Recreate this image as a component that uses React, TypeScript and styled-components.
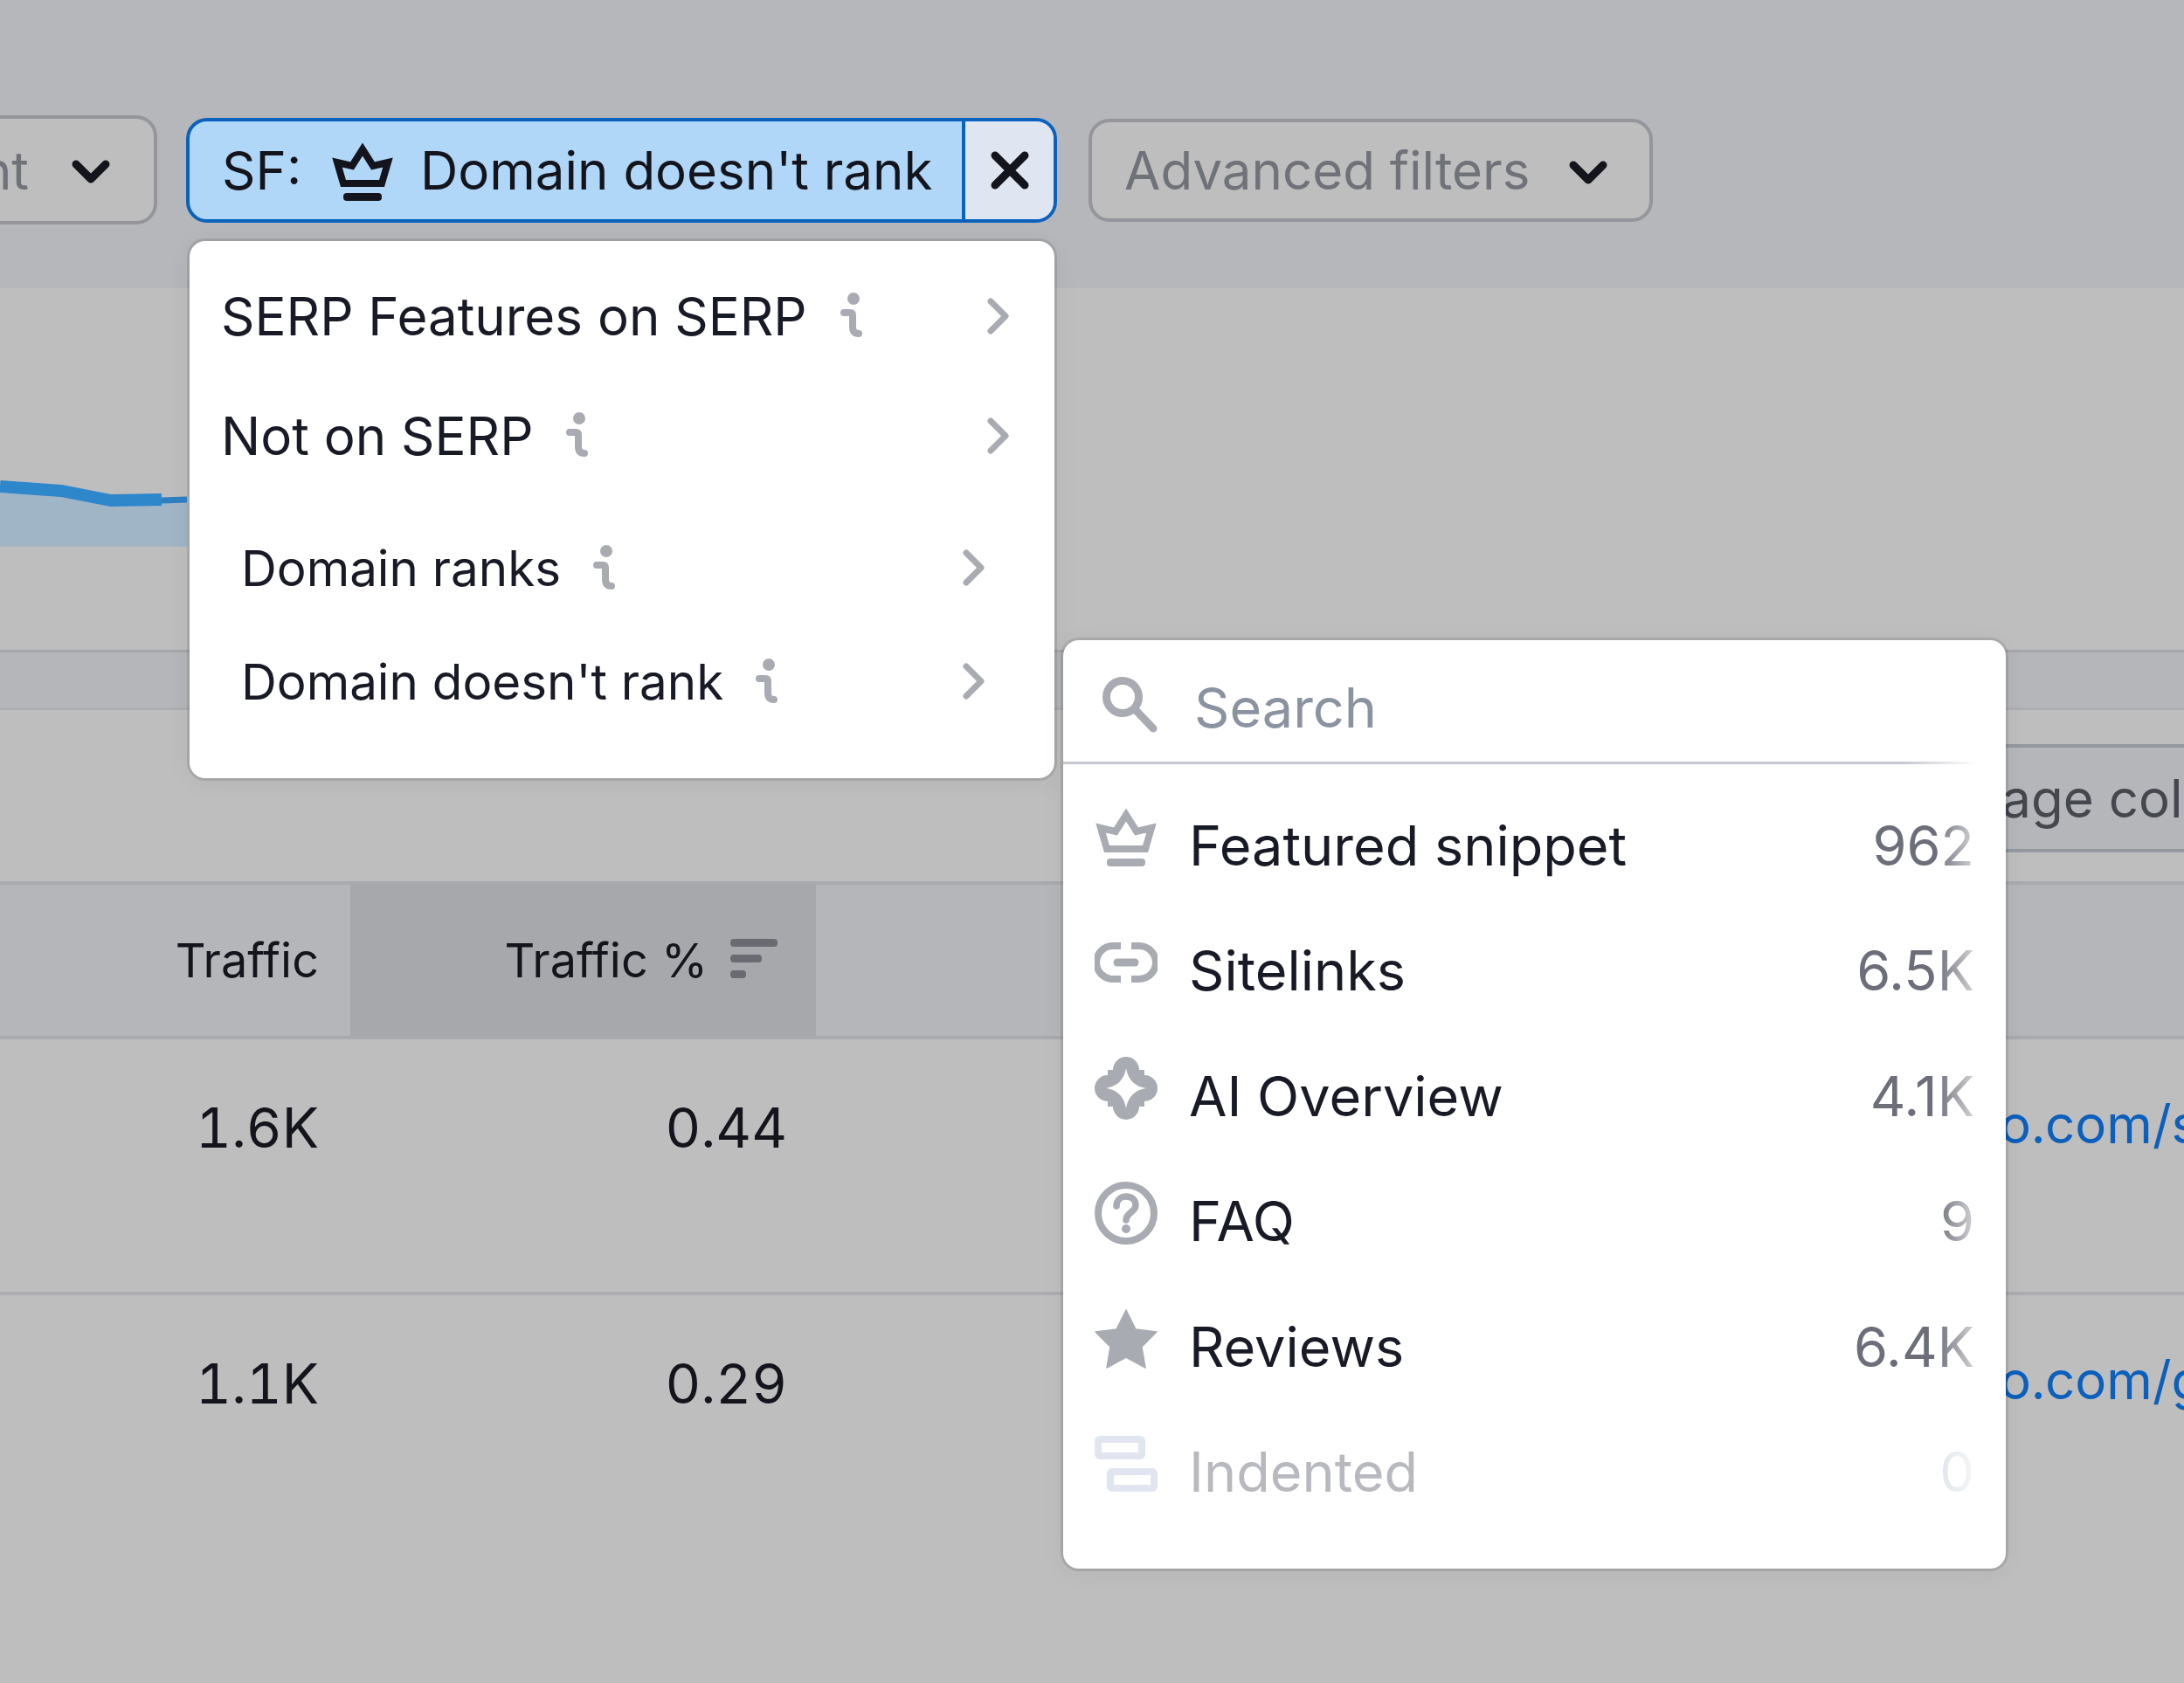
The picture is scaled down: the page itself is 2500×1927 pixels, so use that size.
import React from 'react';
import styled, { createGlobalStyle } from 'styled-components';

const GlobalStyle = createGlobalStyle`
  html, body { margin: 0; padding: 0; }
  body { font-family: Inter, "Liberation Sans", sans-serif; color: #181a25; }
  svg { flex-shrink: 0; }
`;

const Page = styled.div`
  position: relative;
  width: 2500px;
  height: 1927px;
  overflow: hidden;
  background: #bebebe;
  display: flex;
  flex-direction: column;
`;

const TopBar = styled.div`
  height: 330px;
  box-sizing: border-box;
  padding-top: 132px;
  background: #b6b7ba;
  display: flex;
  align-items: flex-start;
  gap: 36px;
`;

const SelectButton = styled.div<{ $clipped?: boolean }>`
  box-sizing: border-box;
  height: ${(p) => (p.$clipped ? 125 : 118)}px;
  margin-top: ${(p) => (p.$clipped ? 0 : 4)}px;
  width: ${(p) => (p.$clipped ? '180px' : '646px')};
  border: 4px solid #94969c;
  border-left-width: ${(p) => (p.$clipped ? 0 : 4)}px;
  border-radius: ${(p) => (p.$clipped ? '0 24px 24px 0' : '24px')};
  background: #bebebe;
  display: flex;
  align-items: center;
  justify-content: ${(p) => (p.$clipped ? 'flex-end' : 'flex-start')};
  overflow: hidden;
  padding: ${(p) => (p.$clipped ? '0 50px 0 0' : '0 0 0 37px')};
  font-size: 60px;
  color: #707279;
  white-space: nowrap;
`;

const ButtonLabel = styled.span<{ $gap: number }>`
  flex-shrink: 0;
  margin-right: ${(p) => p.$gap}px;
`;

const FilterChip = styled.div`
  box-sizing: border-box;
  width: 997px;
  height: 120px;
  margin: 3px 0 0 -3px;
  border: 4px solid #0a62bd;
  border-radius: 24px;
  overflow: hidden;
  display: flex;
  background: #b0d6f8;
  font-size: 60px;
  color: #14151c;
  white-space: nowrap;
`;

const ChipBody = styled.div`
  width: 884px;
  flex-shrink: 0;
  box-sizing: border-box;
  padding-left: 37px;
  display: flex;
  align-items: center;
`;

const ChipClose = styled.div`
  flex: 1;
  border-left: 4px solid #0a62bd;
  background: #e0e6f1;
  display: flex;
  align-items: center;
  justify-content: center;
`;

const ChipPrefix = styled.span`
  width: 125px;
  flex-shrink: 0;
`;

const ChipCrown = styled.span`
  display: flex;
  width: 102px;
  flex-shrink: 0;
  margin-top: 2px;
`;

const ChartArea = styled.div`
  height: 414px;
  display: flex;
  align-items: flex-start;
`;

const ChartSvg = styled.svg`
  display: block;
  margin-top: 210px;
`;

const TabBand = styled.div`
  height: 69px;
  box-sizing: border-box;
  background: #b5b6b9;
  border-top: 3px solid #a6a7ac;
  border-bottom: 3px solid #aeafb3;
`;

const Toolbar = styled.div`
  margin: 39px 0 0 1217px;
  height: 124px;
  box-sizing: border-box;
  background: #b5b6b9;
  border-top: 4px solid #9498a0;
  border-bottom: 4px solid #9498a0;
  display: flex;
  align-items: center;
  padding-left: 951px;
  font-size: 60px;
  color: #45474f;
  white-space: nowrap;
`;

const Table = styled.div`
  margin-top: 33px;
  display: grid;
  grid-template-columns: 401px 533px 1fr;
`;

const HeadCell = styled.div<{ $sorted?: boolean }>`
  height: 181px;
  box-sizing: border-box;
  border-top: 4px solid #a9aab0;
  border-bottom: 4px solid #a9aab0;
  background: ${(p) => (p.$sorted ? '#a7a8ac' : '#b5b6ba')};
  display: flex;
  align-items: center;
  justify-content: flex-end;
  gap: 26px;
  padding-right: ${(p) => (p.$sorted ? 44 : 36)}px;
  font-size: 54px;
  color: #14151c;
`;

const SortBars = styled.div`
  display: flex;
  flex-direction: column;
  gap: 9px;
  margin-bottom: 5px;
`;

const SortBar = styled.div<{ $width: number }>`
  width: ${(p) => p.$width}px;
  height: 9px;
  border-radius: 4px;
  background: #6a6b72;
`;

const BodyCell = styled.div<{ $h: number; $last?: boolean; $pr?: number }>`
  height: ${(p) => p.$h}px;
  box-sizing: border-box;
  border-bottom: ${(p) => (p.$last ? 'none' : '4px solid #acadb2')};
  padding-top: 61px;
  padding-right: ${(p) => p.$pr ?? 36}px;
  text-align: right;
  font-size: 63px;
  font-variant-numeric: tabular-nums;
  line-height: 80px;
  color: #14151c;
`;

const UrlCell = styled(BodyCell)`
  text-align: left;
  padding-top: 57px;
  padding-left: 1355px;
  padding-right: 0;
  font-size: 60px;
  color: #0b60bd;
  white-space: nowrap;
`;

const Menu = styled.div`
  position: absolute;
  box-sizing: border-box;
  background: #fff;
  border-radius: 18px;
  box-shadow: 0 0 0 3px rgba(0, 0, 0, 0.1), 0 4px 30px rgba(0, 0, 0, 0.06);
`;

const FilterMenu = styled(Menu)`
  left: 217px;
  top: 276px;
  width: 990px;
  height: 615px;
  padding: 17px 0 46px;
`;

const SpacedGroup = styled.div`
  margin-top: 18px;
`;

const MenuRow = styled.div<{ $sub?: boolean }>`
  height: ${(p) => (p.$sub ? 130 : 137)}px;
  box-sizing: border-box;
  padding: ${(p) => (p.$sub ? '0 80px 0 59px' : '0 52px 0 36px')};
  display: flex;
  align-items: center;
  font-size: ${(p) => (p.$sub ? 56.5 : 60)}px;
  white-space: nowrap;
`;

const RowInfo = styled.svg<{ $sub?: boolean }>`
  margin-left: ${(p) => (p.$sub ? 37 : 38)}px;
  margin-bottom: 2px;
`;

const RowChevron = styled.svg`
  margin-left: auto;
`;

const FeatureMenu = styled(Menu)`
  left: 1217px;
  top: 733px;
  width: 1079px;
  height: 1063px;
`;

const SearchBox = styled.div`
  height: 142px;
  box-sizing: border-box;
  margin-right: 33px;
  border-bottom: 3px solid #c5c8d0;
  border-image: linear-gradient(to right, #c5c8d0 92%, #ffffff) 1;
  padding: 14px 0 0 45px;
  display: flex;
  align-items: center;
  gap: 42px;
  font-size: 63px;
  color: #8b92a0;
`;

const SearchGlass = styled.svg`
  margin-top: -6px;
`;

const FeatureList = styled.div`
  padding-top: 21px;
`;

const FeatureRow = styled.div<{ $off?: boolean }>`
  height: 143.5px;
  box-sizing: border-box;
  padding: 0 36px 0 36px;
  display: flex;
  align-items: center;
  font-size: 63px;
  color: ${(p) => (p.$off ? '#b7b9bf' : '#181a25')};
  white-space: nowrap;
`;

const FeatureIcon = styled.span`
  display: flex;
  justify-content: center;
  align-items: center;
  width: 72px;
  height: 72px;
  margin: -18px 36px 0 0;
`;

const FeatureCount = styled.span<{ $off?: boolean }>`
  margin-left: auto;
  color: ${(p) => (p.$off ? '#dfe3ea' : '#6c6e79')};
  -webkit-mask-image: linear-gradient(to left, rgba(0, 0, 0, 0.3), #000 44px);
  mask-image: linear-gradient(to left, rgba(0, 0, 0, 0.3), #000 44px);
`;

const DownMark = styled.svg`
  margin-top: 5px;
`;

const GREY = '#a9abb2';

const Crown = ({ color }: { color: string }) => (
  <svg width="72" height="67" viewBox="0 0 72 67">
    <path
      d="M36 8 L48 27 L65 23 L58 47 H14 L7 23 L24 27 Z"
      fill="none"
      stroke={color}
      strokeWidth="8"
      strokeLinejoin="miter"
      strokeMiterlimit="6"
    />
    <rect x="14" y="58" width="44" height="9" rx="4" fill={color} />
  </svg>
);

const LinkIcon = () => (
  <svg width="72" height="46" viewBox="0 0 72 46" fill="none" stroke={GREY} strokeWidth="8">
    <path d="M30 4 H21 A19 19 0 0 0 21 42 H30" />
    <path d="M42 4 H51 A19 19 0 0 1 51 42 H42" />
    <path d="M26 23 H46" strokeLinecap="round" strokeWidth="9" />
  </svg>
);

const SparkIcon = () => (
  <svg width="72" height="72" viewBox="0 0 72 72">
    <g fill={GREY}>
      <circle cx="36" cy="15" r="15" />
      <circle cx="36" cy="57" r="15" />
      <circle cx="15" cy="36" r="15" />
      <circle cx="57" cy="36" r="15" />
      <rect x="15" y="15" width="42" height="42" />
    </g>
    <path d="M36 13 C38 26 46 34 59 36 C46 38 38 46 36 59 C34 46 26 38 13 36 C26 34 34 26 36 13 Z" fill="#fff" />
  </svg>
);

const HelpIcon = () => (
  <svg width="72" height="72" viewBox="0 0 72 72" fill="none" stroke={GREY}>
    <circle cx="36" cy="36" r="32" strokeWidth="8" />
    <path d="M25 28 C25 21 30 17 36 17 C43 17 47 21 47 27 C47 35 36 35 36 44" strokeWidth="7.5" strokeLinecap="round" />
    <circle cx="36" cy="54" r="5" fill={GREY} stroke="none" />
  </svg>
);

const StarIcon = () => (
  <svg width="72" height="68" viewBox="0 0 72 68">
    <path
      d="M36 1 L47 23 L71 26 L54 43 L58 67 L36 55 L14 67 L18 43 L1 26 L25 23 Z"
      fill={GREY}
      stroke={GREY}
      strokeWidth="1.5"
      strokeLinejoin="round"
    />
  </svg>
);

const IndentIcon = () => (
  <svg width="72" height="64" viewBox="0 0 72 64" fill="none" stroke="#e0e5ef" strokeWidth="8">
    <rect x="4" y="4" width="50" height="19" rx="2" />
    <rect x="18" y="41" width="50" height="19" rx="2" />
  </svg>
);

const InfoMark = ({ sub }: { sub?: boolean }) => (
  <RowInfo $sub={sub} width="25" height="51" viewBox="0 0 25 51" fill="none" stroke={GREY}>
    <circle cx="15" cy="7" r="7" fill={GREY} stroke="none" />
    <path d="M4 23 H11 C13 23 14 24 14 26 V39 C14 44 16 47 21 47" strokeWidth="8" strokeLinecap="round" />
  </RowInfo>
);

const ChevronRight = () => (
  <RowChevron width="25" height="42" viewBox="0 0 25 42" fill="none" stroke={GREY} strokeWidth="7" strokeLinecap="round" strokeLinejoin="round">
    <path d="M4 4 L21 21 L4 38" />
  </RowChevron>
);

const ChevronDown = () => (
  <DownMark width="44" height="28" viewBox="0 0 44 28" fill="none" stroke="#14151c" strokeWidth="9" strokeLinecap="round" strokeLinejoin="round">
    <path d="M5 5 L22 22 L39 5" />
  </DownMark>
);

const CloseIcon = () => (
  <svg width="44" height="44" viewBox="0 0 44 44" fill="none" stroke="#14151c" strokeWidth="9" strokeLinecap="round">
    <path d="M5 5 L39 39 M39 5 L5 39" />
  </svg>
);

const features = [
  { name: 'Featured snippet', count: '962', icon: <Crown color={GREY} /> },
  { name: 'Sitelinks', count: '6.5K', icon: <LinkIcon /> },
  { name: 'AI Overview', count: '4.1K', icon: <SparkIcon /> },
  { name: 'FAQ', count: '9', icon: <HelpIcon /> },
  { name: 'Reviews', count: '6.4K', icon: <StarIcon /> },
  { name: 'Indented', count: '0', icon: <IndentIcon />, off: true },
];

export default function App() {
  return (
    <Page>
      <GlobalStyle />
      <TopBar>
        <SelectButton $clipped>
          <ButtonLabel $gap={49}>Intent</ButtonLabel>
          <ChevronDown />
        </SelectButton>
        <FilterChip>
          <ChipBody>
            <ChipPrefix>SF:</ChipPrefix>
            <ChipCrown>
              <Crown color="#14151c" />
            </ChipCrown>
            <span>Domain doesn't rank</span>
          </ChipBody>
          <ChipClose>
            <CloseIcon />
          </ChipClose>
        </FilterChip>
        <SelectButton>
          <ButtonLabel $gap={45}>Advanced filters</ButtonLabel>
          <ChevronDown />
        </SelectButton>
      </TopBar>

      <ChartArea>
        <ChartSvg width="214" height="90" viewBox="0 0 214 90">
          <path d="M0 17 L70 22 L127 33 L185 32 L214 32 V86 H0 Z" fill="#a0b5c6" />
          <path d="M0 17 L70 22 L127 33 L185 32" fill="none" stroke="#2e86cb" strokeWidth="14" />
          <path d="M185 33 L214 32" fill="none" stroke="#2e7fc2" strokeWidth="7" />
        </ChartSvg>
      </ChartArea>
      <TabBand />
      <Toolbar>Manage columns</Toolbar>

      <Table>
        <HeadCell>Traffic</HeadCell>
        <HeadCell $sorted>
          Traffic %
          <SortBars>
            <SortBar $width={54} />
            <SortBar $width={36} />
            <SortBar $width={18} />
          </SortBars>
        </HeadCell>
        <HeadCell />

        <BodyCell $h={293}>1.6K</BodyCell>
        <BodyCell $h={293} $pr={33}>0.44</BodyCell>
        <UrlCell $h={293}>o.com/s</UrlCell>

        <BodyCell $h={444} $last>1.1K</BodyCell>
        <BodyCell $h={444} $last $pr={33}>0.29</BodyCell>
        <UrlCell $h={444} $last>o.com/g</UrlCell>
      </Table>

      <FilterMenu>
        <MenuRow>
          SERP Features on SERP
          <InfoMark />
          <ChevronRight />
        </MenuRow>
        <MenuRow>
          Not on SERP
          <InfoMark />
          <ChevronRight />
        </MenuRow>
        <SpacedGroup>
          <MenuRow $sub>
            Domain ranks
            <InfoMark sub />
            <ChevronRight />
          </MenuRow>
          <MenuRow $sub>
            Domain doesn't rank
            <InfoMark sub />
            <ChevronRight />
          </MenuRow>
        </SpacedGroup>
      </FilterMenu>

      <FeatureMenu>
        <SearchBox>
          <SearchGlass width="63" height="64" viewBox="0 0 63 64" fill="none" stroke={GREY} strokeWidth="9" strokeLinecap="round">
            <circle cx="23" cy="23" r="18.5" />
            <path d="M37 37 L58 59" />
          </SearchGlass>
          Search
        </SearchBox>
        <FeatureList>
          {features.map((f) => (
            <FeatureRow key={f.name} $off={f.off}>
              <FeatureIcon>{f.icon}</FeatureIcon>
              {f.name}
              <FeatureCount $off={f.off}>{f.count}</FeatureCount>
            </FeatureRow>
          ))}
        </FeatureList>
      </FeatureMenu>
    </Page>
  );
}
